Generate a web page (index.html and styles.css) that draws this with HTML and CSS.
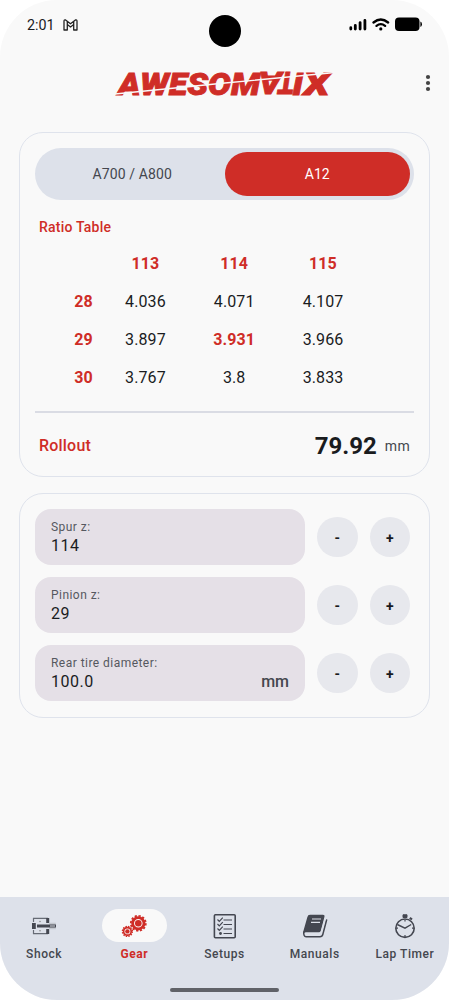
FILE: index.html
```html
<!DOCTYPE html>
<html lang="en">
<head>
<meta charset="utf-8">
<title>Awesomatix</title>
<link rel="stylesheet" href="styles.css">
</head>
<body>
<div class="screen">
  <header class="status">
    <div class="status-left"><span>2:01</span>
      <svg width="15" height="12" viewBox="0 0 15 12" fill="none" stroke="#222" stroke-width="1.3" stroke-linejoin="round"><path d="M1 2.2Q1 .6 2.6 1L7.5 4.8 12.4 1Q14 .6 14 2.2V11H10.7V5.6L7.5 8 4.3 5.6V11H1ZM4.3 2.5V5.6M10.7 2.5V5.6"/></svg>
    </div>
    <div class="camera"></div>
    <div class="status-right">
      <svg width="74" height="16" viewBox="0 0 74 16"><g stroke="#000" stroke-width="2.8" stroke-linecap="round"><path d="M2.8 11.7V13M7.3 9.4V13M12.1 6.6V13M16.9 4.4V13"/></g><g fill="none" stroke="#000" stroke-width="2.3" stroke-linecap="round"><path d="M25.5 6.5Q32.8 .5 40.1 6.5M28.5 9.9Q32.8 6.4 37.1 9.9"/></g><circle cx="32.8" cy="12.9" r="1.6"/><rect x="47" y="1.6" width="24.5" height="13.4" rx="4"/><path d="M72.4 5.5Q74 6 74 8.3T72.4 11Z"/></svg>
    </div>
  </header>
  <div class="appbar">
    <svg class="logo" width="220" height="48" viewBox="0 -9 220 48">
      <g class="logo-text">
        <text x="3" y="26" textLength="142" lengthAdjust="spacingAndGlyphs">AWESOM</text>
        <text transform="translate(167 3.2) rotate(180)" textLength="23" lengthAdjust="spacingAndGlyphs">A</text>
        <text transform="translate(179.5 3.2) rotate(180)" textLength="16" lengthAdjust="spacingAndGlyphs">T</text>
        <text x="177.5" y="26" textLength="10.5" lengthAdjust="spacingAndGlyphs">I</text>
        <text x="188.5" y="26" textLength="26" lengthAdjust="spacingAndGlyphs">X</text>
      </g>
      <path d="M0 25Q60 19 110 14T220 3.5" stroke="#f9f9f9" stroke-width="1.3" fill="none"/>
    </svg>
    <svg class="more" width="6" height="18" viewBox="0 0 6 18" fill="#444"><circle cx="3" cy="3" r="2.1"/><circle cx="3" cy="9" r="2.1"/><circle cx="3" cy="15" r="2.1"/></svg>
  </div>
  <main>
    <section class="card">
      <div class="tabs"><div class="tab">A700 / A800</div><div class="tab on">A12</div></div>
      <h2>Ratio Table</h2>
      <div class="ratios">
        <i></i><b>113</b><b>114</b><b>115</b>
        <b class="row-head">28</b><span>4.036</span><span>4.071</span><span>4.107</span>
        <b class="row-head">29</b><span>3.897</span><b>3.931</b><span>3.966</span>
        <b class="row-head">30</b><span>3.767</span><span>3.8</span><span>3.833</span>
      </div>
      <div class="rollout"><span class="rollout-label">Rollout</span><strong>79.92</strong><span class="unit">mm</span></div>
    </section>
    <section class="card inputs">
      <div class="line"><div class="field"><label>Spur z:</label><div class="value">114</div></div><div class="btn">-</div><div class="btn">+</div></div>
      <div class="line"><div class="field"><label>Pinion z:</label><div class="value">29</div></div><div class="btn">-</div><div class="btn">+</div></div>
      <div class="line"><div class="field"><label>Rear tire diameter:</label><div class="value">100.0<span>mm</span></div></div><div class="btn">-</div><div class="btn">+</div></div>
    </section>
  </main>
  <nav>
    <div class="items">
      <div class="item"><div class="pill">
        <svg width="26" height="26" viewBox="0 0 26 26"><path d="M2.5 9V5.3H17M2.5 17V20.7H17" fill="none" stroke="#666b75" stroke-width="1.2"/><path d="M15.2 5H18.2V10H15.2ZM15.2 16H18.2V21H15.2ZM1 10H4.8V16H1Z" fill="#444751"/><path d="M18 9.7H24.8V16.3H18Z" fill="#c3c7ce"/><path d="M6 11.5H25V14.5H6Z" fill="#444751"/><path d="M19 13H24" stroke="#d7dbe2"/><circle cx="9" cy="8.5" r=".7" fill="#777"/><circle cx="9" cy="17.7" r=".7" fill="#777"/></svg>
      </div><span>Shock</span></div>
      <div class="item active"><div class="pill">
        <svg width="26" height="26" viewBox="0 0 26 26"><g fill="none" stroke="#cf2d27"><circle cx="17.3" cy="10.3" r="5.7" stroke-width="2.8"/><circle cx="17.3" cy="10.3" r="7.5" stroke-width="1.8" stroke-dasharray="2.2 1.727"/><circle cx="6.4" cy="18.4" r="3.8" stroke-width="1.7"/><circle cx="6.4" cy="18.4" r="5" stroke-width="1.3" stroke-dasharray="1.5 1.118"/></g><circle cx="17.3" cy="10.3" r="3.3" fill="#cf2d27"/><circle cx="6.4" cy="18.4" r="2.2" fill="#cf2d27"/></svg>
      </div><span>Gear</span></div>
      <div class="item"><div class="pill">
        <svg width="26" height="26" viewBox="0 0 26 26" fill="none" stroke="#444751"><rect x="2.4" y="1.7" width="20.8" height="23" rx="1" stroke-width="1.6"/><path d="M11.5 7H20M11.5 11.5H20M11.5 16H20M11.5 20.5H20" stroke-width="1.2"/><path d="M5.5 6.5L7.3 8.3 10.8 4.7M5.5 11L7.3 12.8 10.8 9.2M5.5 15.5L7.3 17.3 10.8 13.7" stroke-width="1.2"/><circle cx="8.5" cy="20.5" r="1.4" fill="#444751" stroke="none"/></svg>
      </div><span>Setups</span></div>
      <div class="item"><div class="pill">
        <svg width="26" height="26" viewBox="0 0 26 26"><path d="M8 1.8H21Q23 1.8 22.5 3.8L18.8 17.8Q18.3 19.3 16.8 19.3H4Q2.5 19.3 1.8 20.5Q1 19.7 1.4 18L5.3 4.2Q5.8 1.8 8 1.8Z" fill="#444751"/><path d="M1.7 19Q1.5 23.7 4 23.7H18Q20.2 23.7 20.8 21.5L24.6 7" fill="none" stroke="#444751" stroke-width="1.5" stroke-linecap="round"/><path d="M3.5 21.3H17.5Q18.7 21.3 19.2 19.5L23.5 4.5" fill="none" stroke="#dde1ea" stroke-width="1.2"/><path d="M10 6H19M9 9.3H18" stroke="#dde1ea" stroke-width="1.2"/></svg>
      </div><span>Manuals</span></div>
      <div class="item"><div class="pill">
        <svg width="26" height="26" viewBox="0 0 26 26" fill="none" stroke="#444751"><circle cx="13" cy="15.2" r="9.2" stroke-width="1.6"/><path d="M5.3 11.5L13 15.2 19.2 11.5" stroke-width="1.4"/><path d="M13 6.5V8.5M13 22V24M4 15.2H6M20 15.2H22" stroke-width="1.2"/><path d="M11 1.8H15V4.5H11Z" fill="#444751" stroke-width="1"/><path d="M17.8 4.8L20 6.5" stroke-width="2.2"/></svg>
      </div><span>Lap Timer</span></div>
    </div>
    <div class="handle"></div>
  </nav>
</div>
</body>
</html>
```
FILE: styles.css
```css
* { box-sizing: border-box; }
body { margin: 0; background: #fff; font-family: Roboto, sans-serif; color: #1a1c1e; }
.screen { width: 449px; height: 1000px; display: flex; flex-direction: column; background: #f9f9f9; border-radius: 57px; overflow: hidden; }
.status { height: 60px; padding: 15px 27px 0; display: grid; grid-template-columns: 1fr 32px 1fr; align-items: start; }
.status-left { display: flex; align-items: center; gap: 8px; height: 19px; font-size: 14.3px; }
.camera { width: 32px; height: 32px; border-radius: 50%; background: #000; }
.status-right { display: flex; justify-content: flex-end; padding-top: 1px; }
.appbar { height: 72px; padding: 0 18px 0 115px; display: flex; justify-content: space-between; }
.more { margin-top: 14px; }
.logo-text { font: italic 900 32px Roboto, sans-serif; fill: #cf2d27; stroke: #cf2d27; stroke-width: .9px; }
main { flex: 1; padding: 0 19px; display: flex; flex-direction: column; gap: 16px; }
.card { border: 1px solid #dfe3ec; border-radius: 24px; padding: 15px; height: 345px; }
.tabs { height: 52px; border-radius: 26px; padding: 4px; background: #dde1ea; display: flex; }
.tab { flex: 0 0 50%; display: flex; align-items: center; justify-content: center; font-size: 14px; letter-spacing: .1px; color: #44474e; padding-left: 1px; }
.tab.on { background: #cf2d27; color: #fff; border-radius: 23px; padding: 0; }
h2 { margin: 17px 4px 7px; font-size: 14px; line-height: 20px; font-weight: 500; letter-spacing: .22px; color: #cf2d27; }
.ratios { display: grid; grid-template-columns: 66px repeat(3, 88.8px); grid-auto-rows: 38px; align-items: center; text-align: center; font-size: 16px; letter-spacing: .1px; }
.ratios b { font-weight: 700; color: #cf2d27; }
.row-head { padding-left: 31px; }
.rollout { margin-top: 15px; border-top: 2px solid #dadce4; padding: 0 4px; height: 67px; display: flex; align-items: center; }
.rollout-label { flex: 1; color: #cf2d27; font-size: 16px; font-weight: 500; letter-spacing: .2px; }
.rollout strong { font-size: 24px; letter-spacing: 0; }
.unit { margin-left: 8px; font-size: 14px; letter-spacing: .3px; color: #44474e; }
.inputs { height: 225px; display: flex; flex-direction: column; gap: 12px; }
.line { height: 56px; display: flex; align-items: center; gap: 12px; }
.field { width: 270px; height: 56px; border-radius: 16px; background: #e5e0e7; padding: 10px 16px 0; }
.field label { display: block; height: 16px; line-height: 16px; font-size: 12px; letter-spacing: .46px; color: #55585f; }
.value { display: flex; justify-content: space-between; font-size: 16px; line-height: 22px; letter-spacing: .5px; }
.value span { font-weight: 500; letter-spacing: 0; color: #44474e; }
.btn { width: 40.5px; height: 40.5px; border-radius: 50%; background: #e7e8ed; display: flex; align-items: center; justify-content: center; font-size: 14px; font-weight: 700; padding-top: 1px; }
nav { height: 103px; background: #dde1ea; padding-top: 12px; }
.items { display: flex; height: 79px; margin: 0 -1px; }
.item { flex: 1; display: flex; flex-direction: column; align-items: center; font-size: 12px; line-height: 16px; font-weight: 500; letter-spacing: .55px; color: #44474e; gap: 4px; white-space: nowrap; }
.pill { width: 65px; height: 33px; border-radius: 17px; display: flex; align-items: center; justify-content: center; }
.active { color: #cf2d27; font-weight: 700; }
.active .pill { background: #f9f9f9; }
.handle { width: 109px; height: 4px; border-radius: 2px; background: #606268; margin: 0 auto; }
```
